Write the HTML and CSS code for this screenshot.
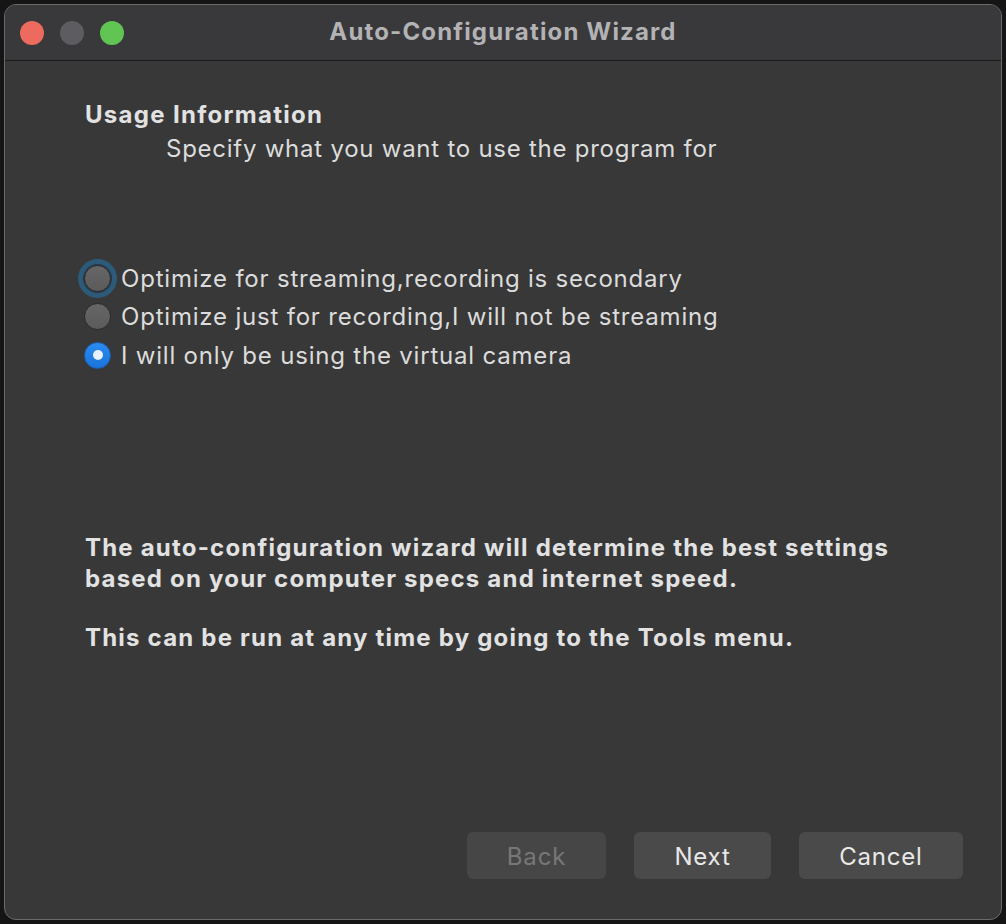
FILE: index.html
```html
<!DOCTYPE html>
<html>
<head>
<meta charset="utf-8">
<link rel="stylesheet" href="styles.css">
</head>
<body>
<div class="window">
  <div class="titlebar">
    <div class="lights">
      <span class="light red"></span>
      <span class="light grey"></span>
      <span class="light green"></span>
    </div>
    <div class="title">Auto-Configuration Wizard</div>
  </div>
  <div class="content">
    <div class="heading">Usage Information</div>
    <div class="subtitle">Specify what you want to use the program for</div>
    <div class="options">
      <div class="option"><span class="radio focus"></span><span>Optimize for streaming,recording is secondary</span></div>
      <div class="option"><span class="radio"></span><span>Optimize just for recording,I will not be streaming</span></div>
      <div class="option"><span class="radio checked"></span><span>I will only be using the virtual camera</span></div>
    </div>
    <p class="info">The auto-configuration wizard will determine the best settings<br>based on your computer specs and internet speed.</p>
    <p class="info second">This can be run at any time by going to the Tools menu.</p>
    <div class="buttons">
      <button class="btn back" disabled>Back</button>
      <button class="btn next">Next</button>
      <button class="btn cancel">Cancel</button>
    </div>
  </div>
</div>
</body>
</html>
```

FILE: styles.css
```css
html, body {
  margin: 0;
  padding: 0;
  background: #151515;
  font-family: Inter, "Noto Sans", "Liberation Sans", sans-serif;
}

.window {
  margin: 4px 4px 0 4px;
  width: 998px;
  height: 916px;
  box-sizing: border-box;
  border: 1px solid #6a6a6a;
  border-radius: 12px;
  background: #383838;
  overflow: hidden;
  display: flex;
  flex-direction: column;
}

.titlebar {
  height: 55px;
  flex: none;
  background: #39383b;
  border-bottom: 1px solid #1a1a1a;
  display: flex;
  align-items: center;
  position: relative;
}

.lights {
  display: flex;
  gap: 16px;
  padding-left: 15px;
}

.light {
  width: 24px;
  height: 24px;
  border-radius: 50%;
  display: block;
}
.red { background: #ed6a5e; }
.grey { background: #5d5c60; }
.green { background: #61c554; }

.title {
  position: absolute;
  left: 0;
  right: 0;
  top: 0;
  bottom: 3px;
  display: flex;
  align-items: center;
  justify-content: center;
  color: #b3b2b5;
  font-weight: 700;
  font-size: 24px;
  letter-spacing: 1.15px;
}

.content {
  flex: 1;
  display: flex;
  flex-direction: column;
  padding: 38px 38px 40px 80px;
  color: #dedede;
}

.heading {
  font-weight: 700;
  font-size: 24px;
  line-height: 32px;
  height: 32px;
  color: #e2e2e2;
  letter-spacing: 1.3px;
}

.subtitle {
  margin-top: 2px;
  padding-left: 81px;
  font-size: 24px;
  line-height: 32px;
  color: #dcdcdc;
  letter-spacing: 0.75px;
}

.options {
  margin-top: 94px;
  display: flex;
  flex-direction: column;
}

.option {
  display: flex;
  align-items: center;
  height: 38.5px;
  font-size: 24px;
  color: #dcdcdc;
  gap: 10px;
  letter-spacing: 0.8px;
}

.radio {
  width: 27px;
  height: 27px;
  margin-left: -1px;
  border-radius: 50%;
  box-sizing: border-box;
  background: linear-gradient(#666, #5b5b5b);
  border: 1px solid #2c2c2c;
  flex: none;
  display: flex;
  align-items: center;
  justify-content: center;
}

.radio.focus {
  box-shadow: 0 0 0 1px #24384a, 0 0 0 6px #2e5a7a;
}

.radio.checked {
  background: linear-gradient(#2a8bf0, #1a74da);
  border-color: #1a5fb0;
}
.radio.checked::after {
  content: "";
  width: 10px;
  height: 10px;
  border-radius: 50%;
  background: #e8f1ff;
}

.info {
  margin: 157px 0 0 0;
  font-size: 24px;
  font-weight: 700;
  line-height: 31px;
  color: #e2e2e2;
  letter-spacing: 1.2px;
}
.info.second {
  margin-top: 28px;
}

.buttons {
  margin-top: auto;
  display: flex;
  justify-content: flex-end;
  gap: 28px;
}

.btn {
  height: 47px;
  border: none;
  border-radius: 6px;
  background: #4a4a4a;
  color: #e8e8e8;
  font-family: inherit;
  font-size: 24px;
  letter-spacing: 0.8px;
  padding: 2px 0 0 0;
}
.back { width: 139px; color: #777; background: #464646; }
.next { width: 137px; }
.cancel { width: 164px; }
```
